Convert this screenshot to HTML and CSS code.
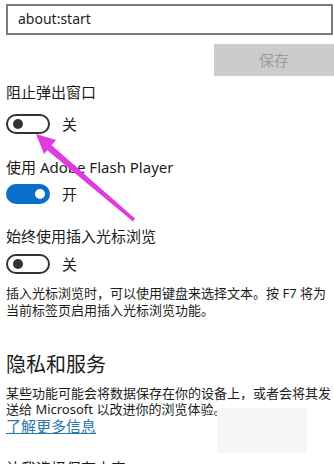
FILE: index.html
```html
<!DOCTYPE html>
<html lang="zh-CN">
<head>
<meta charset="utf-8">
<link rel="stylesheet" href="styles.css">
</head>
<body>
<div class="page">
  <div class="url-input">about:start</div>
  <div class="save-btn">保存</div>

  <div class="label l1">阻止弹出窗口</div>
  <div class="toggle-row t1"><span class="toggle off"><span class="knob"></span></span><span class="state">关</span></div>

  <div class="label l2">使用 Adobe Flash Player</div>
  <div class="toggle-row t2"><span class="toggle on"><span class="knob"></span></span><span class="state">开</span></div>

  <div class="label l3">始终使用插入光标浏览</div>
  <div class="toggle-row t3"><span class="toggle off"><span class="knob"></span></span><span class="state">关</span></div>

  <p class="desc">插入光标浏览时，可以使用键盘来选择文本。按 F7 将为<br>当前标签页启用插入光标浏览功能。</p>

  <h2 class="heading">隐私和服务</h2>
  <p class="para">某些功能可能会将数据保存在你的设备上，或者会将其发<br>送给 Microsoft 以改进你的浏览体验。</p>
  <a class="link" href="#">了解更多信息</a>

  <div class="label l4">让我选择保存内容</div>
</div>
<div class="ghost"></div>
<svg class="arrow" width="334" height="464" viewBox="0 0 334 464">
  <polygon points="135,218.5 133,221.5 44,147.5 48.5,142.5" fill="#e03ade"/>
  <polygon points="36,134 56,140 44,154" fill="#e03ade"/>
</svg>
</body>
</html>
```
FILE: styles.css
```css
html, body {
  margin: 0;
  padding: 0;
  background: #ffffff;
}
body {
  width: 334px;
  height: 464px;
  overflow: hidden;
  position: relative;
  font-family: "Noto Sans", "Noto Sans CJK SC", sans-serif;
  color: #1c1c1c;
}
.page {
  display: flex;
  flex-direction: column;
  align-items: flex-start;
  padding-left: 6px;
}
.url-input {
  margin-top: 4px;
  box-sizing: border-box;
  width: 327px;
  height: 31px;
  border: 2px solid #7a7a7a;
  padding-left: 10px;
  font-size: 14px;
  line-height: 26px;
  color: #222;
}
.save-btn {
  align-self: flex-end;
  margin-top: 9px;
  width: 120px;
  height: 32px;
  background: #cccccc;
  color: #9c9c9c;
  font-size: 15px;
  line-height: 32px;
  text-align: center;
}
.label {
  font-size: 15px;
  line-height: 20px;
}
.l1 { margin-top: 6px; }
.l2 { margin-top: 23px; }
.l3 { margin-top: 22px; }
.l4 { margin-top: 23px; }
.toggle-row {
  display: flex;
  align-items: center;
  gap: 12px;
  height: 20px;
}
.t1 { margin-top: 12px; }
.t2 { margin-top: 7px; }
.t3 { margin-top: 8px; }
.toggle {
  box-sizing: border-box;
  width: 44px;
  height: 20px;
  border-radius: 10px;
  display: flex;
  align-items: center;
  padding: 0 5px;
}
.toggle.off {
  border: 2px solid #333333;
  justify-content: flex-start;
}
.toggle.off .knob {
  background: #333333;
}
.toggle.on {
  background: #0a6fc8;
  justify-content: flex-end;
}
.toggle.on .knob {
  background: #ffffff;
}
.knob {
  width: 10px;
  height: 10px;
  border-radius: 50%;
}
.state {
  font-size: 15px;
  line-height: 20px;
}
.desc {
  margin: 11px 0 0;
  font-size: 13px;
  line-height: 17px;
}
.heading {
  margin: 33px 0 0;
  font-size: 20px;
  font-weight: normal;
  line-height: 26px;
}
.para {
  margin: 7px 0 0;
  font-size: 13px;
  line-height: 16px;
}
.link {
  font-size: 15px;
  line-height: 18px;
  color: #2677ae;
  text-decoration: underline;
}
.ghost {
  position: absolute;
  left: 217px;
  top: 408px;
  width: 90px;
  height: 45px;
  background: #f6f6f6;
}
.arrow {
  position: absolute;
  left: 0;
  top: 0;
  pointer-events: none;
}
```
